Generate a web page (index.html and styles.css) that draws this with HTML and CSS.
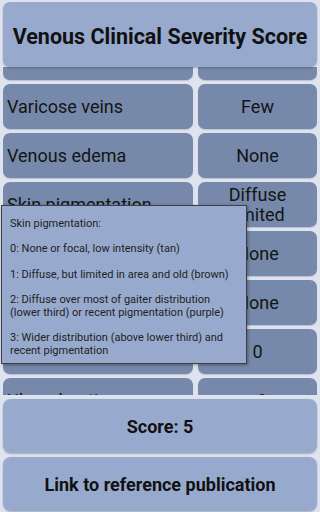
FILE: index.html
```html
<!DOCTYPE html>
<html>
<head>
<meta charset="utf-8">
<link rel="stylesheet" href="styles.css">
</head>
<body>
<div class="app">
  <header class="title">Venous Clinical Severity Score</header>
  <div class="list">
    <div class="grid">
      <div class="cell label">Pain</div><div class="cell value">Occasional</div>
      <div class="cell label">Varicose veins</div><div class="cell value">Few</div>
      <div class="cell label">Venous edema</div><div class="cell value">None</div>
      <div class="cell label">Skin pigmentation</div><div class="cell value two">Diffuse limited</div>
      <div class="cell label">Inflammation</div><div class="cell value">None</div>
      <div class="cell label">Induration</div><div class="cell value">None</div>
      <div class="cell label">Ulcer number</div><div class="cell value">0</div>
      <div class="cell label">Ulcer duration</div><div class="cell value">&nbsp;&nbsp;?</div>
    </div>
  </div>
  <button class="btn">Score: 5</button>
  <button class="btn">Link to reference publication</button>
</div>
<div class="popup">
  <p>Skin pigmentation:</p>
  <p>0: None or focal, low intensity (tan)</p>
  <p>1: Diffuse, but limited in area and old (brown)</p>
  <p>2: Diffuse over most of gaiter distribution (lower third) or recent pigmentation (purple)</p>
  <p>3: Wider distribution (above lower third) and recent pigmentation</p>
</div>
</body>
</html>
```
FILE: styles.css
```css
html, body {
  margin: 0;
  padding: 0;
}
body {
  width: 320px;
  height: 512px;
  background: #dfe3ef;
  font-family: Roboto, "Liberation Sans", sans-serif;
  color: #141414;
  overflow: hidden;
  position: relative;
}
.app {
  height: 512px;
  box-sizing: border-box;
  padding: 2px 3px 1px;
  display: flex;
  flex-direction: column;
}
.title {
  height: 65px;
  flex: none;
  background: #97aacd;
  border-radius: 7px;
  display: flex;
  align-items: center;
  justify-content: center;
  font-weight: bold;
  font-size: 21.5px;
  color: #111;
  position: relative;
  z-index: 2;
  padding-top: 3px;
  box-sizing: border-box;
  box-shadow: 0 1px 2px rgba(0,0,0,0.25);
}
.list {
  height: 328px;
  flex: none;
  overflow: hidden;
}
.grid {
  margin-top: -32px;
  display: grid;
  grid-template-columns: 190px 1fr;
  column-gap: 5px;
  row-gap: 4px;
  grid-auto-rows: 45px;
}
.cell {
  background: #7689aa;
  border-radius: 7px;
  display: flex;
  align-items: center;
  font-size: 18px;
  color: #141414;
  box-shadow: 0 1px 1px rgba(0,0,0,0.15);
}
.label {
  padding-left: 4px;
}
.value {
  justify-content: center;
  text-align: center;
}
.value.two {
  padding: 0 24px;
  line-height: 20px;
}
.btn {
  flex: none;
  height: 54px;
  margin-top: 4px;
  border: none;
  border-radius: 8px;
  background: #97aacd;
  font-family: Roboto, "Liberation Sans", sans-serif;
  font-weight: bold;
  font-size: 18px;
  color: #111;
  box-shadow: 0 1px 2px rgba(0,0,0,0.25);
  padding: 0;
}
.popup {
  position: absolute;
  left: 1px;
  top: 205px;
  width: 246px;
  box-sizing: border-box;
  height: 159px;
  background: #97aacd;
  border: 1px solid #3c3f46;
  box-shadow: 1px 1px 3px rgba(0,0,0,0.35);
  padding: 12px 14px 0 8px;
  font-size: 11px;
  line-height: 12.65px;
  color: #222;
  z-index: 5;
}
.popup p {
  margin: 0 0 12.65px;
}
```
